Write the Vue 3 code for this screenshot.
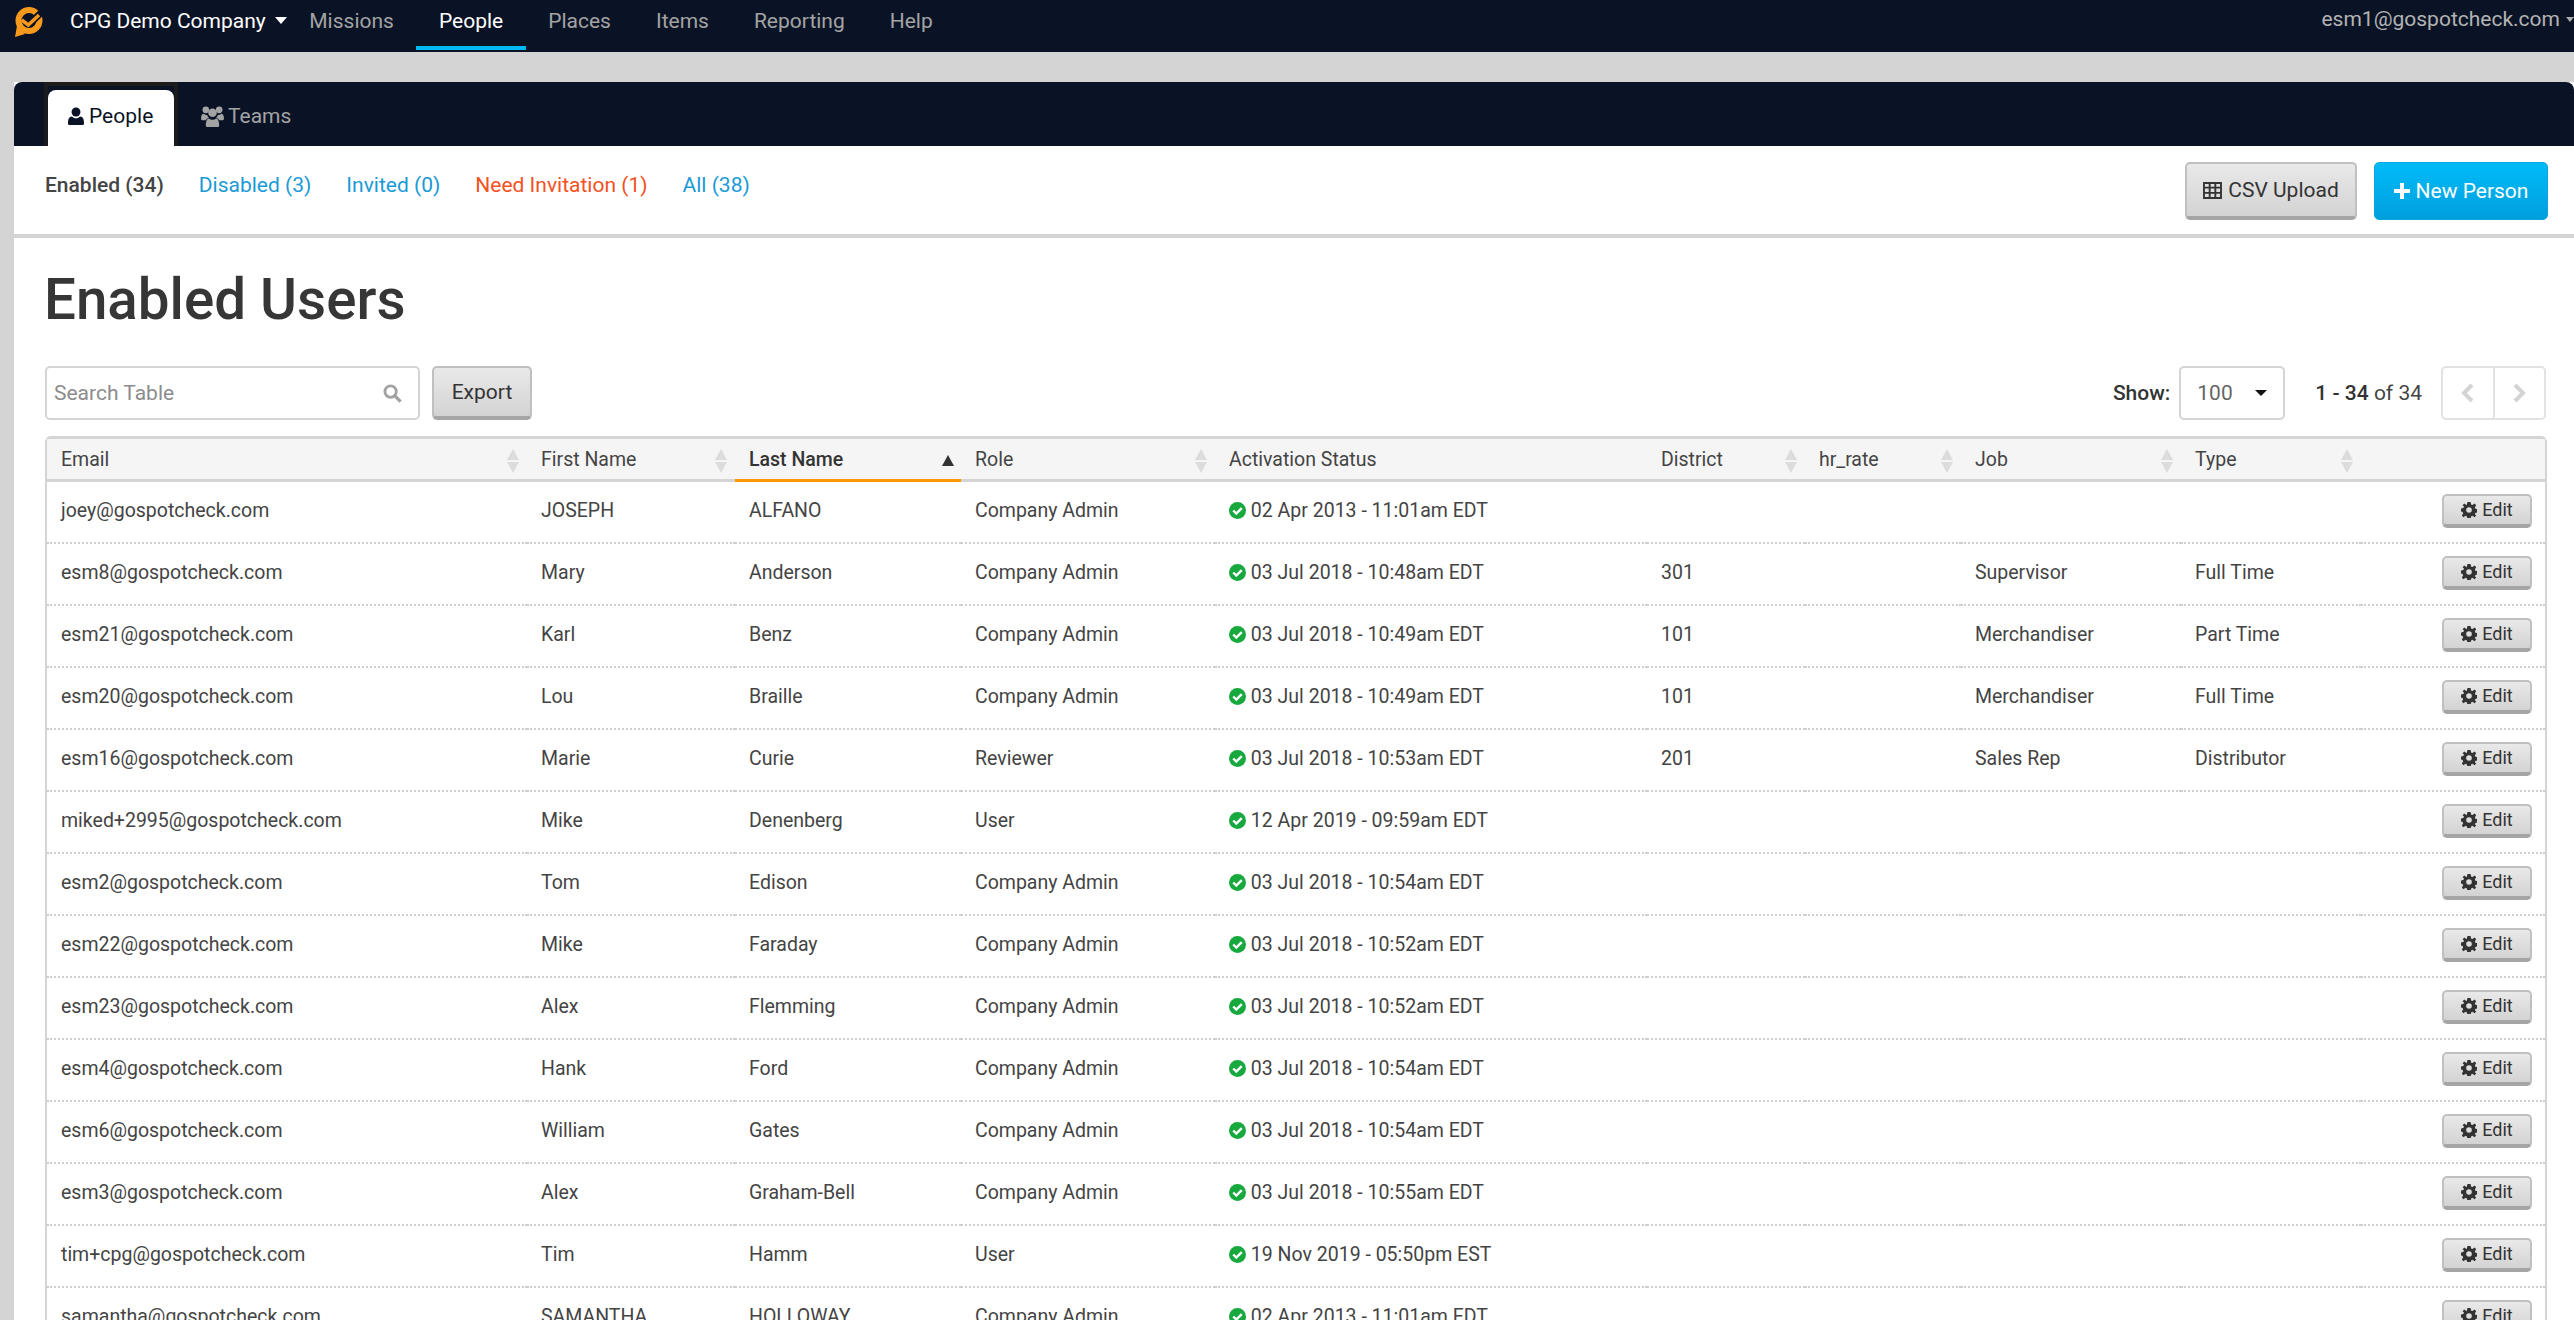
<template>
  <div class="page">
    <nav class="topbar">
      <svg class="logo" viewBox="0 0 30 30" width="30" height="30">
        <circle cx="15" cy="13.500" r="10.500" fill="none" stroke="#f7991c" stroke-width="6"/>
        <path d="M1 30l2-11 8 8z" fill="#f7991c"/>
        <path d="M14.300 18L30 3" stroke="#0a1326" stroke-width="7"/>
        <path d="M7.700 13l6.600 5L25 8" fill="none" stroke="#f7991c" stroke-width="3.500"/>
      </svg>
      <span class="company">CPG Demo Company</span>
      <span class="caret"></span>
      <a v-for="item in navItems" :key="item" class="nav-link" :class="{ active: item === 'People' }">{{ item }}</a>
      <span class="account">esm1@gospotcheck.com</span>
      <span class="account-caret"></span>
    </nav>

    <div class="panel">
      <div class="tabbar">
        <div class="tab-frame">
          <div class="tab current">
            <svg viewBox="0 0 18 20" width="16" height="18"><circle cx="9" cy="5.500" r="5" fill="currentColor"/><path d="M1 20c-1 0-1-1-1-2 0-4 1-7.500 4.500-7.500C6 12 7.500 12.500 9 12.500s3-.5 4.500-2C17 10.500 18 14 18 18c0 1 0 2-1 2z" fill="currentColor"/></svg>
            People
          </div>
        </div>
        <div class="tab">
          <svg viewBox="0 0 24 22" width="23" height="21">
            <g fill="currentColor">
              <circle cx="5" cy="4" r="3.500"/><circle cx="19" cy="4" r="3.500"/><circle cx="12" cy="7" r="4.500"/>
              <path d="M0 13c0-3 1-5 3-5 1 1 2 1.500 3.500 1.500.3 1.500 1 2.500 2 3.200C6.500 13 5.500 14 5 15H2c-1 0-2-.5-2-2zM24 13c0-3-1-5-3-5-1 1-2 1.500-3.500 1.500-.3 1.500-1 2.500-2 3.200 2 .3 3 1.300 3.500 2.300h3c1 0 2-.5 2-2zM6 22c-.6 0-1-.5-1-1.500 0-4 1-7.500 3.500-7.500 1 1 2.200 1.500 3.500 1.500s2.500-.5 3.500-1.500c2.500 0 3.500 3.500 3.500 7.500 0 1-.4 1.500-1 1.500z"/>
            </g>
          </svg>
          Teams
        </div>
      </div>

      <div class="subnav">
        <div class="filters">
          <a class="filter selected">Enabled (34)</a>
          <a class="filter">Disabled (3)</a>
          <a class="filter">Invited (0)</a>
          <a class="filter warn">Need Invitation (1)</a>
          <a class="filter">All (38)</a>
        </div>
        <div class="actions">
          <button class="btn csv">
            <svg viewBox="0 0 20 18" width="19" height="17"><path d="M1 1h18v16H1zM1 6h18M1 11.500h18M7 1v16M13 1v16" fill="none" stroke="currentColor" stroke-width="2"/></svg>
            CSV Upload
          </button>
          <button class="btn primary">
            <svg viewBox="0 0 16 16" width="16" height="16"><path d="M6 0h4v6h6v4h-6v6H6v-6H0V6h6z" fill="currentColor"/></svg>
            New Person
          </button>
        </div>
      </div>

      <div class="content">
        <h1>Enabled Users</h1>
        <div class="toolbar">
          <div class="search">
            <span>Search Table</span>
            <svg viewBox="0 0 20 20" width="19" height="19"><circle cx="8" cy="8" r="6" fill="none" stroke="currentColor" stroke-width="3"/><path d="M12.500 12.500l6 6" stroke="currentColor" stroke-width="3.500"/></svg>
          </div>
          <button class="btn export">Export</button>
          <div class="spacer"></div>
          <span class="show-label">Show:</span>
          <div class="select">100<span class="select-caret"></span></div>
          <span class="range"><b>1 - 34</b> of 34</span>
          <div class="pager">
            <span><svg viewBox="0 0 14 20" width="14" height="20"><path d="M11 2L3 10l8 8" fill="none" stroke="currentColor" stroke-width="4"/></svg></span>
            <span><svg viewBox="0 0 14 20" width="14" height="20"><path d="M3 2l8 8-8 8" fill="none" stroke="currentColor" stroke-width="4"/></svg></span>
          </div>
        </div>

        <table>
          <colgroup>
            <col v-for="w in colWidths" :key="w.id" :style="{ width: w.px + 'px' }" />
          </colgroup>
          <thead>
            <tr>
              <th v-for="col in columns" :key="col" :class="{ sorted: col === 'Last Name' }">
                {{ col }}
                <span v-if="col === 'Last Name'" class="sort-up"></span>
                <span v-else-if="col !== 'Activation Status'" class="sort"></span>
              </th>
              <th></th>
            </tr>
          </thead>
          <tbody>
            <tr v-for="u in users" :key="u.email">
              <td>{{ u.email }}</td>
              <td>{{ u.first }}</td>
              <td>{{ u.last }}</td>
              <td>{{ u.role }}</td>
              <td class="date">
                <svg class="ok" viewBox="0 0 18 18" width="17" height="17"><circle cx="9" cy="9" r="9" fill="#17a93d"/><path d="M4.500 9l3.200 3.200 5.800-5.800" fill="none" stroke="#fff" stroke-width="2.600"/></svg>
                {{ u.activated }}
              </td>
              <td>{{ u.district }}</td>
              <td></td>
              <td>{{ u.job }}</td>
              <td>{{ u.type }}</td>
              <td class="edit-cell">
                <button class="btn edit">
                  <svg viewBox="0 0 20 20" width="16" height="16"><path fill-rule="evenodd" d="M8 0h4l.6 3 1.700.7L17 2l2 2-1.700 2.700.7 1.700 3 .6v4l-3 .6-.7 1.700L19 17l-2 2-2.700-1.700-1.700.7-.6 3H8l-.6-3-1.700-.7L3 19l-2-2 1.700-2.700L2 12.600 0 12V8l3-.6.7-1.700L2 4l2-2 2.700 1.700L7.400 3zM10 6.500a3.500 3.500 0 1 0 0 7 3.500 3.500 0 0 0 0-7z" fill="currentColor"/></svg>
                  Edit
                </button>
              </td>
            </tr>
          </tbody>
        </table>
      </div>
    </div>
  </div>
</template>

<script setup>
const navItems = ['Missions', 'People', 'Places', 'Items', 'Reporting', 'Help']

const columns = ['Email', 'First Name', 'Last Name', 'Role', 'Activation Status', 'District', 'hr_rate', 'Job', 'Type']

const colWidths = [480, 208, 226, 254, 432, 158, 156, 220, 180, 184].map((px, id) => ({ id, px }))

const admin = 'Company Admin'

const users = [
  { email: 'joey@gospotcheck.com', first: 'JOSEPH', last: 'ALFANO', role: admin, activated: '02 Apr 2013 - 11:01am EDT' },
  { email: 'esm8@gospotcheck.com', first: 'Mary', last: 'Anderson', role: admin, activated: '03 Jul 2018 - 10:48am EDT', district: '301', job: 'Supervisor', type: 'Full Time' },
  { email: 'esm21@gospotcheck.com', first: 'Karl', last: 'Benz', role: admin, activated: '03 Jul 2018 - 10:49am EDT', district: '101', job: 'Merchandiser', type: 'Part Time' },
  { email: 'esm20@gospotcheck.com', first: 'Lou', last: 'Braille', role: admin, activated: '03 Jul 2018 - 10:49am EDT', district: '101', job: 'Merchandiser', type: 'Full Time' },
  { email: 'esm16@gospotcheck.com', first: 'Marie', last: 'Curie', role: 'Reviewer', activated: '03 Jul 2018 - 10:53am EDT', district: '201', job: 'Sales Rep', type: 'Distributor' },
  { email: 'miked+2995@gospotcheck.com', first: 'Mike', last: 'Denenberg', role: 'User', activated: '12 Apr 2019 - 09:59am EDT' },
  { email: 'esm2@gospotcheck.com', first: 'Tom', last: 'Edison', role: admin, activated: '03 Jul 2018 - 10:54am EDT' },
  { email: 'esm22@gospotcheck.com', first: 'Mike', last: 'Faraday', role: admin, activated: '03 Jul 2018 - 10:52am EDT' },
  { email: 'esm23@gospotcheck.com', first: 'Alex', last: 'Flemming', role: admin, activated: '03 Jul 2018 - 10:52am EDT' },
  { email: 'esm4@gospotcheck.com', first: 'Hank', last: 'Ford', role: admin, activated: '03 Jul 2018 - 10:54am EDT' },
  { email: 'esm6@gospotcheck.com', first: 'William', last: 'Gates', role: admin, activated: '03 Jul 2018 - 10:54am EDT' },
  { email: 'esm3@gospotcheck.com', first: 'Alex', last: 'Graham-Bell', role: admin, activated: '03 Jul 2018 - 10:55am EDT' },
  { email: 'tim+cpg@gospotcheck.com', first: 'Tim', last: 'Hamm', role: 'User', activated: '19 Nov 2019 - 05:50pm EST' },
  { email: 'samantha@gospotcheck.com', first: 'SAMANTHA', last: 'HOLLOWAY', role: admin, activated: '02 Apr 2013 - 11:01am EDT' },
]
</script>

<style>
html, body {
  margin: 0;
  overflow: hidden;
}
</style>

<style scoped>
.page {
  height: 1320px;
  overflow: hidden;
  background: #d4d4d4;
  font-family: Roboto, "Liberation Sans", sans-serif;
  font-size: 21px;
  color: #444;
}

.topbar {
  height: 52px;
  background: #0a1326;
  display: flex;
  align-items: flex-start;
  box-sizing: border-box;
}
.logo {
  margin: 7px 0 0 14px;
}
.company {
  margin-left: 26px;
  line-height: 42px;
  color: #fff;
}
.caret {
  width: 0;
  height: 0;
  margin: 17px 0 0 9px;
  border: 6px solid transparent;
  border-top: 7px solid #fff;
  border-bottom: 0;
}
.nav-link {
  padding: 0 22.500px;
  height: 50px;
  box-sizing: border-box;
  line-height: 42px;
  color: #a3a3a3;
}
.nav-link.active {
  color: #fff;
  border-bottom: 4px solid #00b9f5;
}
.account {
  margin-left: auto;
  line-height: 38px;
  color: #b3b3b3;
}
.account-caret {
  width: 0;
  height: 0;
  margin: 17px 0 0 6px;
  border: 4px solid transparent;
  border-top: 5px solid #aaa;
  border-bottom: 0;
}

.panel {
  margin: 30px 0 0 14px;
  background: #fff;
}
.tabbar {
  height: 64px;
  background: #0a1326;
  border-radius: 8px 8px 0 0;
  display: flex;
  align-items: flex-end;
  padding-left: 30px;
  box-sizing: border-box;
}
.tab-frame {
  height: 64px;
  border: solid #1b1b1b;
  border-width: 4px 4px 0;
  box-sizing: border-box;
  display: flex;
  align-items: flex-end;
}
.tab {
  height: 56px;
  display: flex;
  align-items: center;
  gap: 4px;
  padding: 0 20px 4px 23px;
  box-sizing: border-box;
  color: #a3a3a3;
}
.tab.current {
  width: 126px;
  gap: 5px;
  padding: 0 0 4px 20px;
  background: #fff;
  color: #0a1326;
  border-radius: 8px 8px 0 0;
  margin-top: 4px;
}

.subnav {
  height: 88px;
  border-bottom: 4px solid #d4d4d4;
  display: flex;
  justify-content: space-between;
  padding: 0 26px 0 31px;
}
.filters {
  display: flex;
  gap: 35px;
  padding-top: 27px;
  line-height: 24px;
}
.filter {
  color: #1a9ad6;
}
.filter.selected {
  color: #444;
  font-weight: 500;
}
.filter.warn {
  color: #f4511e;
}
.actions {
  display: flex;
  gap: 17px;
  padding-top: 16px;
}

.btn {
  display: inline-flex;
  align-items: center;
  justify-content: center;
  gap: 6px;
  box-sizing: border-box;
  font: inherit;
  color: #333;
  background: linear-gradient(#e9e9e9, #d3d3d3);
  border: 2px solid #c0c0c0;
  border-bottom: 4px solid #a5a5a5;
  border-radius: 5px;
  padding: 0;
}
.csv {
  width: 172px;
  height: 58px;
}
.primary {
  width: 174px;
  height: 58px;
  color: #fff;
  background: linear-gradient(#00bbf8, #009fdc);
  border: 1px solid #0da5de;
}
.export {
  width: 100px;
  height: 54px;
  margin-left: 12px;
}
.edit {
  width: 90px;
  height: 34px;
  font-size: 18px;
  gap: 5px;
}

.content {
  padding: 34px 28px 0 31px;
}
h1 {
  margin: 0 0 38px -1px;
  font-size: 56.500px;
  line-height: 56px;
  font-weight: 500;
  color: #363636;
}
.toolbar {
  height: 54px;
  display: flex;
  align-items: center;
  margin-bottom: 16px;
}
.search {
  width: 375px;
  height: 54px;
  box-sizing: border-box;
  border: 2px solid #d4d4d4;
  border-radius: 5px;
  display: flex;
  align-items: center;
  justify-content: space-between;
  padding: 0 16px 0 7px;
  color: #8c8c8c;
}
.search svg {
  color: #a3a3a3;
}
.spacer {
  flex: 1;
}
.show-label {
  color: #333;
  font-weight: 500;
}
.select {
  width: 106px;
  height: 54px;
  margin-left: 9px;
  box-sizing: border-box;
  border: 2px solid #d4d4d4;
  border-radius: 5px;
  display: flex;
  align-items: center;
  justify-content: space-between;
  padding: 0 16px;
  color: #666;
}
.select-caret {
  border: 6px solid transparent;
  border-top: 6px solid #111;
  border-bottom: 0;
}
.range {
  margin-left: 30px;
  color: #444;
}
.range b {
  font-weight: 500;
  color: #333;
}
.pager {
  width: 105px;
  height: 54px;
  margin-left: 19px;
  box-sizing: border-box;
  border: 2px solid #e2e2e2;
  border-radius: 5px;
  display: flex;
  color: #d4d4d4;
}
.pager span {
  flex: 1;
  display: flex;
  align-items: center;
  justify-content: center;
}
.pager span + span {
  border-left: 2px solid #e2e2e2;
}

table {
  width: 2502px;
  table-layout: fixed;
  border-collapse: separate;
  border-spacing: 0;
  border: 3px solid #d4d4d4;
  border-width: 3px 2px 0 2px;
  border-radius: 6px 6px 0 0;
  font-size: 19.500px;
}
th {
  height: 40px;
  padding: 0 0 0 14px;
  position: relative;
  text-align: left;
  font-weight: 400;
  background: #f5f5f5;
  border-bottom: 3px solid #d4d4d4;
}
th.sorted {
  font-weight: 500;
  color: #333;
  border-bottom-color: #ff9800;
}
.sort {
  position: absolute;
  right: 8px;
  top: 10px;
  width: 12px;
  height: 24px;
}
.sort::before,
.sort::after {
  content: "";
  position: absolute;
  left: 0;
  border: 6px solid transparent;
}
.sort::before {
  top: 0;
  border-top: 0;
  border-bottom: 11px solid #dcdcdc;
}
.sort::after {
  bottom: 0;
  border-bottom: 0;
  border-top: 11px solid #dcdcdc;
}
.sort-up {
  position: absolute;
  right: 7px;
  top: 16px;
  border: 6px solid transparent;
  border-top: 0;
  border-bottom: 11px solid #333;
}
td {
  height: 57px;
  padding: 0 0 3px 14px;
  border-bottom: 2px dotted #cfcfcf;
  white-space: nowrap;
}
.date {
  font-size: 19.500px;
}
.ok {
  vertical-align: -2px;
}
.edit-cell {
  padding: 0 13px 3px 0;
  text-align: right;
}
</style>
